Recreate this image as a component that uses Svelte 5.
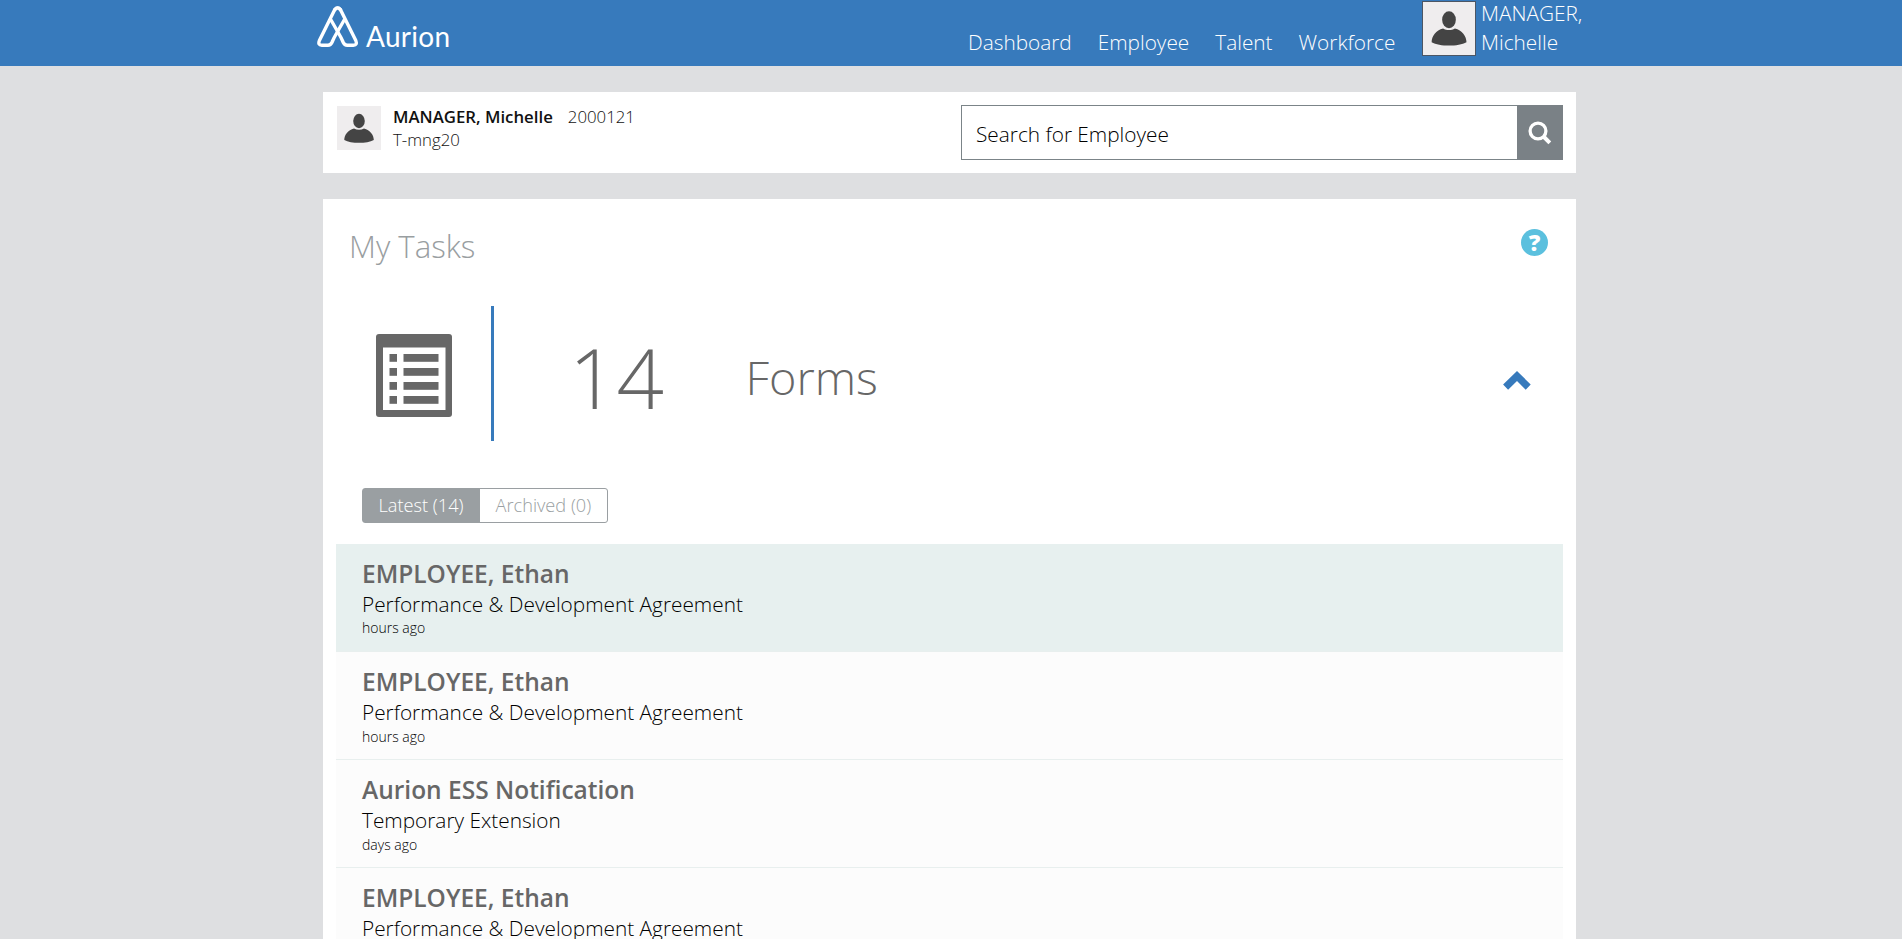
<script>
  const nav = ['Dashboard', 'Employee', 'Talent', 'Workforce'];
  const tasks = [
    { name: 'EMPLOYEE, Ethan', form: 'Performance & Development Agreement', when: 'hours ago' },
    { name: 'EMPLOYEE, Ethan', form: 'Performance & Development Agreement', when: 'hours ago' },
    { name: 'Aurion ESS Notification', form: 'Temporary Extension', when: 'days ago' },
    { name: 'EMPLOYEE, Ethan', form: 'Performance & Development Agreement', when: '' }
  ];
</script>

{#snippet person()}
  <svg viewBox="0 0 44 44">
    <rect width="44" height="44" fill="#efedee" />
    <ellipse cx="22" cy="15" rx="5.8" ry="7.2" fill="#444" />
    <path d="M17 22.5C11 24 7.3 29 7.3 34C14 37.8 30 37.8 36.8 34C36.8 29 33 24 27 22.5C24 24.2 20 24.2 17 22.5Z" fill="#444" />
  </svg>
{/snippet}

<div class="page">
  <header>
    <div class="brand">
      <svg class="mark" viewBox="0 0 42 42" fill="none" stroke="#fff" stroke-width="3.4" stroke-linejoin="round" stroke-linecap="round">
        <path d="M17.800 3.600Q20.600.2 23.400 3.600L38.800 34.500Q40.600 39.200 36.400 39.200H30.200Q27.500 39.200 26.300 36.500C24.500 32 23 29.500 20.600 25.500L14 14" />
        <path d="M23.400 3.600Q20.600.2 17.800 3.600L2.400 34.500Q.6 39.200 4.800 39.200H11Q13.700 39.200 14.900 36.500C16.700 32 18.200 29.500 20.600 25.500L27.200 14" />
      </svg>
      <span class="word">Aurion</span>
    </div>
    <nav>
      {#each nav as item}<a href="#top">{item}</a>{/each}
    </nav>
    <div class="user">
      <div class="portrait">{@render person()}</div>
      <div class="username">MANAGER,<br />Michelle</div>
    </div>
  </header>

  <main>
    <section class="card identity">
      <div class="avatar">{@render person()}</div>
      <div class="who">
        <div><b>MANAGER, Michelle</b><span class="num">2000121</span></div>
        <div>T-mng20</div>
      </div>
      <div class="search">
        <div class="field">Search for Employee</div>
        <div class="go">
          <svg viewBox="0 0 24 24" fill="none" stroke="#fff">
            <circle cx="10" cy="10" r="7.9" stroke-width="3.3" />
            <path d="M15.5 15.5L21.8 21.8" stroke-width="4" />
          </svg>
        </div>
      </div>
    </section>

    <section class="card tasks">
      <div class="head">
        <h1>My Tasks</h1>
        <div class="help">?</div>
      </div>
      <div class="summary">
        <svg class="form" viewBox="0 0 76 83">
          <rect width="76" height="83" rx="3" fill="#676767" />
          <rect x="7" y="13.5" width="62.500" height="62.500" fill="#fff" />
          {#each [20, 34, 48, 62] as y}
            <rect x="13.500" {y} width="7.500" height="7.800" fill="#676767" />
            <rect x="27.500" {y} width="35" height="7.800" fill="#676767" />
          {/each}
        </svg>
        <div class="rule"></div>
        <div class="count">14</div>
        <div class="label">Forms</div>
        <svg class="chevron" viewBox="0 0 28 19"><path d="M14 0L27.700 13.500L22.700 18.700L14 10L5.100 18.700L.1 13.500Z" fill="#377abc" /></svg>
      </div>
      <div class="tabs">
        <div class="tab active"><span>Latest (14)</span></div>
        <div class="tab"><span>Archived (0)</span></div>
      </div>
      <div class="list">
        {#each tasks as t, i}
          <div class="row" class:selected={i === 0}>
            <div class="name">{t.name}</div>
            <div class="sub">{t.form}</div>
            <div class="when">{t.when}</div>
          </div>
        {/each}
      </div>
    </section>
  </main>
</div>

<style>
  :global(body) { background: #dedfe1; overflow: hidden; }
  * { box-sizing: border-box; }
  svg { display: block; }
  .page { height: 939px; overflow: hidden; font-family: "Open Sans", sans-serif; font-weight: 300; color: #111; white-space: nowrap; }
  header { height: 66px; background: #377abc; color: #fff; display: flex; padding-left: 317px; font-size: 20.800px; line-height: 29px; }
  .brand { display: flex; width: 651px; }
  .mark { width: 42px; height: 42px; margin-top: 6px; }
  .word { font: 400 28px/40px Lato, sans-serif; margin: 16px 0 0 7px; letter-spacing: 0.3px; }
  nav { display: flex; gap: 26px; padding-top: 28px; width: 454px; }
  nav a { color: #fff; text-decoration: none; }
  .user { display: flex; gap: 5px; }
  .portrait { width: 54px; height: 55px; border: 1px solid #4c5664; margin-top: 1px; background: #efedee; }
  .username { margin-top: -1px; }
  main { width: 1253px; margin: 26px 0 0 323px; display: flex; flex-direction: column; gap: 26px; }
  .card { background: #fff; }
  .identity { height: 81px; display: flex; padding: 13px 13px 0 14px; }
  .avatar { width: 44px; height: 44px; margin-top: 1px; }
  .who { margin: 0 0 0 12px; width: 568px; font-size: 16.800px; line-height: 23px; }
  b { font-weight: 600; }
  .num { margin-left: 15px; }
  .search { display: flex; width: 602px; height: 55px; }
  .field { flex: 1; border: 1px solid #7b8488; border-right: 0; padding-left: 14px; font-size: 20.800px; line-height: 57px; color: #000; }
  .go { width: 46px; background: #7a8186; padding: 16px 0 0 11px; }
  .go svg { width: 24px; height: 24px; }
  .tasks { height: 800px; padding: 0 13px; }
  .head { display: flex; justify-content: space-between; padding: 29px 15px 0 13px; height: 107px; }
  h1 { margin: 0; font-size: 31.200px; line-height: 37px; font-weight: 300; color: #999ea1; }
  .help { width: 27px; height: 27px; margin-top: 0.5px; border-radius: 50%; background: #5bc0de; color: #fff; font: 800 23px/27px "Open Sans", sans-serif; text-align: center; }
  .summary { display: flex; height: 135px; color: #676767; padding: 0 32px 0 39.5px; }
  .form { width: 76px; height: 83px; margin-top: 28px; }
  .rule { width: 3px; background: #377abc; margin-left: 39.5px; }
  .count { width: 251.5px; padding-left: 75px; font-size: 83.200px; line-height: 114px; margin-top: 14px; }
  .label { flex: 1; font-size: 46.800px; line-height: 64px; margin-top: 39px; }
  .chevron { width: 28px; height: 19px; margin-top: 65px; }
  .tabs { display: flex; width: 246px; height: 35px; margin: 47px 0 21px 26px; border: 1px solid #9a9fa2; border-radius: 3px; font-size: 18.200px; line-height: 33px; color: #9a9fa2; }
  .tab { flex: 1; padding-left: 15.5px; }
  .tab.active { flex: none; width: 117px; background: #9a9fa2; color: #fff; }
  .row { height: 108.100px; background: #fcfcfc; border-bottom: 1px solid #e8efee; padding: 13px 26px 0; }
  .selected { background: #e7f0ef; }
  .name { font-size: 24.500px; font-weight: 600; line-height: 34px; color: #676767; }
  .sub { font-size: 20.800px; line-height: 27.400px; color: #000; }
  .when { font-size: 14px; line-height: 20px; color: #000; }
</style>
